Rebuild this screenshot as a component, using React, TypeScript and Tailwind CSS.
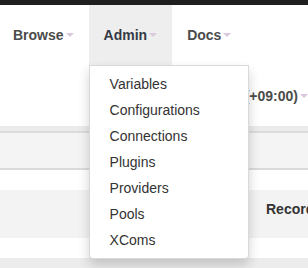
const menuItems = ['Variables', 'Configurations', 'Connections', 'Plugins', 'Providers', 'Pools', 'XComs'];

function Caret() {
  return (
    <span className="ml-[2px] inline-block h-0 w-0 border-x-4 border-t-4 border-x-transparent border-t-[#dcc8de] align-middle" />
  );
}

export default function App() {
  return (
    <div className="min-h-screen overflow-hidden bg-white font-['Liberation_Sans',Arial,sans-serif] text-[14px] leading-[20px] text-[#333]">
      <div className="h-[5px] bg-[#1f1f1f]" />

      {/* Navbar */}
      <nav className="bg-white">
        <ul className="flex h-[60px] font-bold">
          <li className="flex items-center pl-[13px] pr-[15px] text-[#4b4b4b]">
            Browse
            <Caret />
          </li>
          <li className="relative flex items-center bg-[#eeeeee] px-[15px] text-[#333a45]">
            Admin
            <Caret />
            <ul className="absolute left-0 top-full z-10 w-[160px] rounded-b-[4px] border border-black/15 bg-white py-[5px] font-normal text-[#333] shadow-[0_6px_12px_rgba(0,0,0,0.175)]">
              {menuItems.map((item) => (
                <li key={item} className="px-[20px] py-[3px] leading-[20px]">
                  {item}
                </li>
              ))}
            </ul>
          </li>
          <li className="flex items-center px-[15px] text-[#4b4b4b]">
            Docs
            <Caret />
          </li>
        </ul>
        <div className="flex h-[61px] items-center justify-end font-bold text-[#4b4b4b]">
          <span className="whitespace-nowrap">(+09:00)</span>
          <Caret />
        </div>
      </nav>
      <div className="h-[5px] bg-[#ebebeb]" />
      <div className="h-[2px] bg-[#dcdcdc]" />

      {/* Page header */}
      <div className="h-[37px] border-b-2 border-[#dadada] bg-[#f4f4f4]" />

      <div className="h-[20px]" />

      {/* Table header */}
      <div className="flex h-[48px] bg-[#f3f3f3] pt-[9px] font-bold text-[#333]">
        <div className="w-[266px] shrink-0" />
        <div className="whitespace-nowrap">Records</div>
      </div>
      <div className="h-[20px] bg-white" />
      <div className="h-[40px] bg-[#ececec]" />
    </div>
  );
}
